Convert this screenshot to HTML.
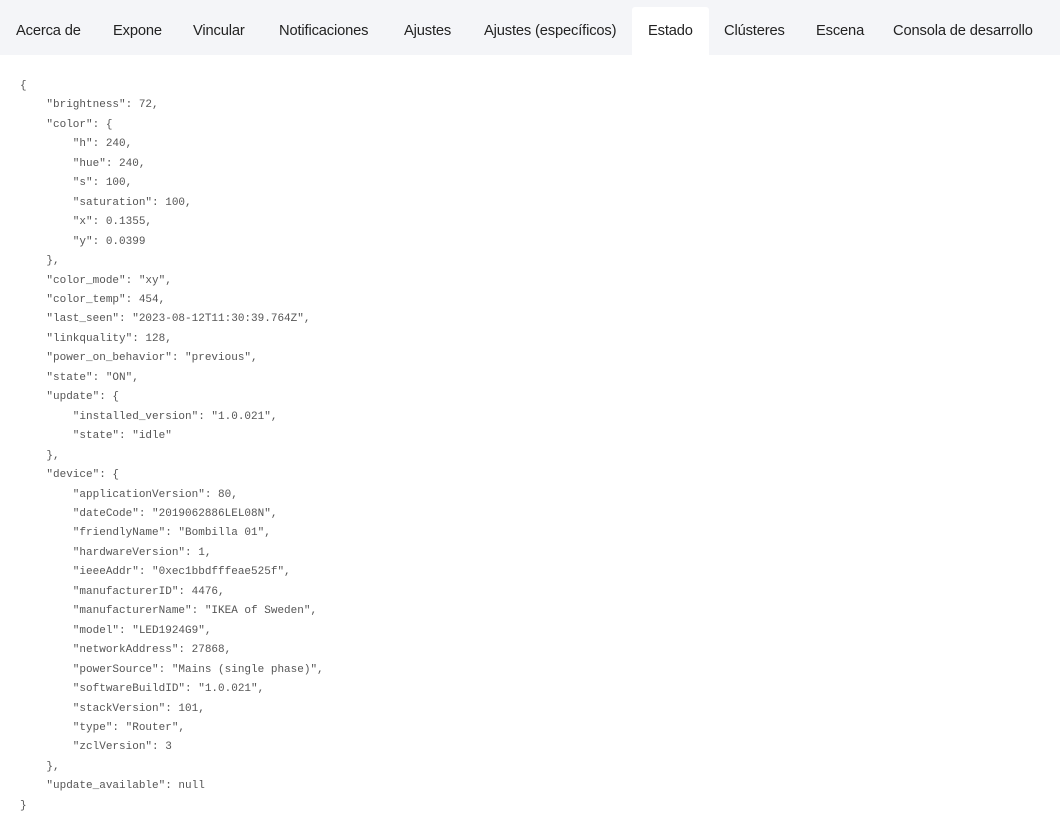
<!DOCTYPE html>
<html><head><meta charset="utf-8"><style>
body{margin:0;background:#fff;width:1060px;height:835px;overflow:hidden;font-family:"Liberation Sans",sans-serif}
.bar{position:absolute;left:0;top:0;width:1060px;height:55px;background:#f4f5f8}
.act{position:absolute;left:632px;top:7px;width:77px;height:48px;background:#fff;border-radius:3px 3px 0 0}
.t{position:absolute;top:23px;font-size:14.7px;color:#222;white-space:nowrap;letter-spacing:-0.15px}
pre{position:absolute;left:20px;top:77px;margin:0;font-family:"Liberation Mono",monospace;font-size:11px;line-height:19.46px;color:#555}
</style></head><body>
<div class="bar"></div><div class="act"></div>
<span class="t" style="left:16px">Acerca de</span>
<span class="t" style="left:113px">Expone</span>
<span class="t" style="left:193px">Vincular</span>
<span class="t" style="left:279px">Notificaciones</span>
<span class="t" style="left:404px">Ajustes</span>
<span class="t" style="left:484px">Ajustes (específicos)</span>
<span class="t" style="left:648px">Estado</span>
<span class="t" style="left:724px">Clústeres</span>
<span class="t" style="left:816px">Escena</span>
<span class="t" style="left:893px">Consola de desarrollo</span>
<pre>{
    "brightness": 72,
    "color": {
        "h": 240,
        "hue": 240,
        "s": 100,
        "saturation": 100,
        "x": 0.1355,
        "y": 0.0399
    },
    "color_mode": "xy",
    "color_temp": 454,
    "last_seen": "2023-08-12T11:30:39.764Z",
    "linkquality": 128,
    "power_on_behavior": "previous",
    "state": "ON",
    "update": {
        "installed_version": "1.0.021",
        "state": "idle"
    },
    "device": {
        "applicationVersion": 80,
        "dateCode": "2019062886LEL08N",
        "friendlyName": "Bombilla 01",
        "hardwareVersion": 1,
        "ieeeAddr": "0xec1bbdfffeae525f",
        "manufacturerID": 4476,
        "manufacturerName": "IKEA of Sweden",
        "model": "LED1924G9",
        "networkAddress": 27868,
        "powerSource": "Mains (single phase)",
        "softwareBuildID": "1.0.021",
        "stackVersion": 101,
        "type": "Router",
        "zclVersion": 3
    },
    "update_available": null
}</pre>
</body></html>
